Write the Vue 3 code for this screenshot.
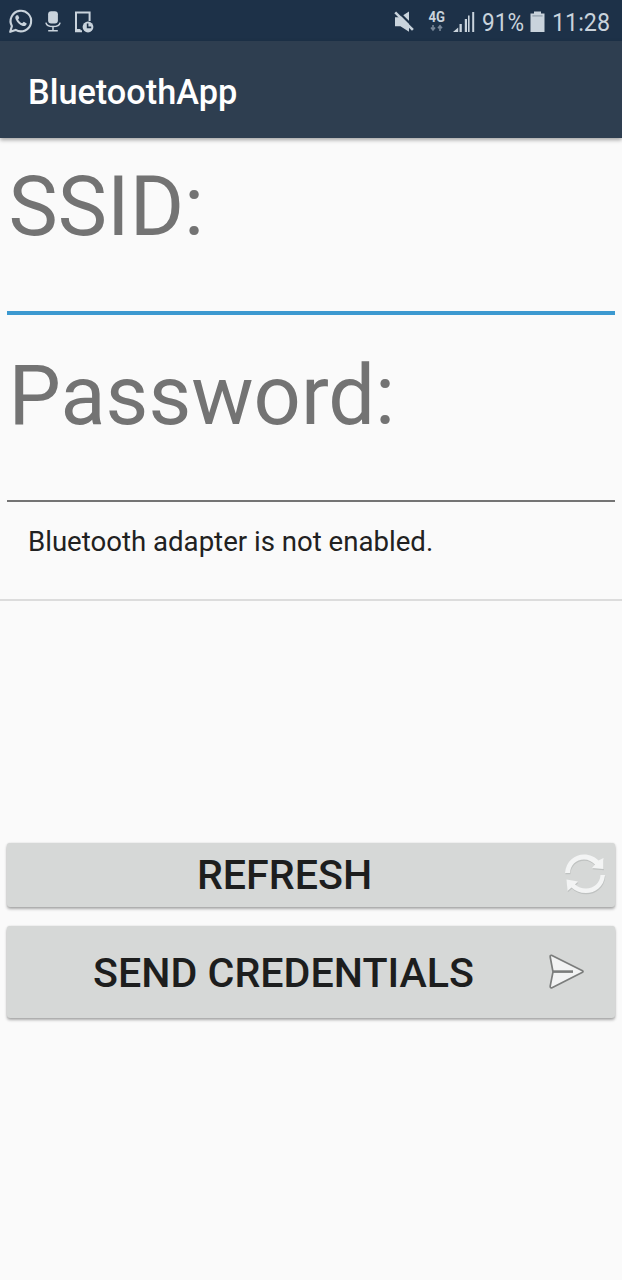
<script setup>
import { ref } from 'vue'

const ssid = ref('')
const password = ref('')
const devices = ref(['Bluetooth adapter is not enabled.'])
</script>

<template>
  <div class="screen">
    <div class="status">
      <svg class="whatsapp" width="26" height="26" viewBox="0 0 26 26">
        <path d="M2.2 23.8 L3.9 18.1 A10.3 10.3 0 1 1 7.6 21.9 Z" fill="none" stroke="#c9d3dc" stroke-width="2.1" stroke-linejoin="round" />
        <path d="M8.6 7.2 C7.2 8 6.9 9.6 7.8 11.5 C9.2 14.6 11.7 16.9 14.8 17.9 C16.9 18.5 18.6 17.4 18.7 15.5 L15.8 13.8 L14.2 15.3 C12.3 14.5 10.9 13.2 10.1 11.4 L11.3 10.1 L10.1 7.3 Z" fill="#c9d3dc" />
      </svg>
      <svg class="mic" width="16" height="22" viewBox="0 0 16 22">
        <rect x="3.1" y="0.3" width="9.8" height="12.2" rx="3" fill="#c9d3dc" />
        <path d="M0.9 11.6 C1.5 14.8 4.5 15.6 8 15.6 S14.5 14.8 15.1 11.6 M8 16 V20 M3.2 19.8 H12.8" fill="none" stroke="#c9d3dc" stroke-width="1.5" />
      </svg>
      <svg class="device" width="21" height="23" viewBox="0 0 21 23">
        <path d="M15.6 10 V1.5 H2 V20.2 H8" fill="none" stroke="#c9d3dc" stroke-width="2" />
        <path d="M2 18 H6.5 V21 H2z" fill="#c9d3dc" />
        <circle cx="14" cy="16" r="5.4" fill="#c9d3dc" />
        <path d="M13.6 12.6 V16.4 H17.2" fill="none" stroke="#1d3148" stroke-width="1.6" />
      </svg>
      <div class="grow"></div>
      <svg class="mute" width="21" height="23" viewBox="0 0 21 23">
        <path d="M1 6.2 H6 L15 0.5 V20.7 L6.4 15.2 H1z" fill="#c9d3dc" />
        <path d="M3.4 0 L20.8 17.2" stroke="#1d3148" stroke-width="2.2" />
        <path d="M1.2 1.4 L18.9 18.9" stroke="#c9d3dc" stroke-width="2.6" />
      </svg>
      <svg class="network" width="20" height="23" viewBox="0 0 20 23">
        <text x="0.5" y="10.8" font-size="13.8" font-weight="700" textLength="16.5" lengthAdjust="spacingAndGlyphs" fill="#c9d3dc">4G</text>
        <path d="M5 14 V18.8 M3 16.6 L5 19 L7 16.6 M12 20 V15 M10 17.2 L12 14.8 L14 17.2" fill="none" stroke="#788798" stroke-width="1.6" />
      </svg>
      <svg class="signal" width="23" height="22" viewBox="0 0 23 22">
        <path d="M0.5 21 L5.8 16.5 V21z M7.1 13 H9.4 V21 H7.1z M12.4 8 H14.6 V21 H12.4z" fill="#c9d3dc" transform="translate(-0.6 0)" />
        <path d="M15 4.5 H16.6 V21 H15z M19.2 1 H21.2 V21 H19.2z" fill="#c9d3dc" />
      </svg>
      <svg class="percent" width="46" height="34" viewBox="0 0 46 34">
        <text x="1" y="26" font-size="26.5" textLength="42" lengthAdjust="spacingAndGlyphs" fill="#c9d3dc">91%</text>
      </svg>
      <svg class="battery" width="15" height="22" viewBox="0 0 15 22">
        <path d="M4 0.5 H11 V2.6 H14.5 V21 H0.5 V2.6 H4z" fill="#c9d3dc" />
        <path d="M2.4 4.9 H12.6" stroke="#8f9caa" stroke-width="1.2" />
      </svg>
      <svg class="clock" width="62" height="34" viewBox="0 0 62 34">
        <text x="1" y="26" font-size="26.5" textLength="58" lengthAdjust="spacingAndGlyphs" fill="#c9d3dc">11:28</text>
      </svg>
    </div>
    <header class="appbar"><h1>BluetoothApp</h1></header>
    <main class="content">
      <label class="label" for="ssid">SSID:</label>
      <input id="ssid" v-model="ssid" class="field active" type="text" />
      <label class="label second" for="password">Password:</label>
      <input id="password" v-model="password" class="field" type="text" />
      <ul class="devices">
        <li v-for="device in devices" :key="device">{{ device }}</li>
      </ul>
      <button class="button refresh" type="button">
        <span>REFRESH</span>
        <svg width="44" height="44" viewBox="0 0 44 44">
          <g fill="#bfc2c1" transform="translate(0.4 1.2)">
            <path d="M2 20 C3 8 12 2 21 2 C27 2 32 4.5 35.5 8 L40.5 5 V16 L29 15 L32 11.5 C29 8.5 25.5 6.5 21 6.5 C13 6.5 7.5 12 7 20z" />
            <path d="M42 22 C41 34 32 40 23 40 C17 40 12 38 8.5 34.5 L4.5 38 L3.5 26.5 L15 28.5 L12 31.5 C15 34 18.5 35.5 23 35.5 C31 35.5 37 30 37.5 22z" />
          </g>
          <g fill="#f3f4f4">
            <path d="M2 20 C3 8 12 1.5 21 1.5 C27 1.5 32 4 35.5 7.5 L40.5 5 V16 L29 15 L32 11.5 C29 8.5 25.5 6.5 21 6.5 C13 6.5 7.5 12 7 20z" />
            <path d="M42 22 C41 34 32 40 23 40 C17 40 12 38 8.5 34.5 L4.5 38 L3.5 26.5 L15 28.5 L12 31.5 C15 34 18.5 35.5 23 35.5 C31 35.5 37 30 37.5 22z" />
          </g>
        </svg>
      </button>
      <button class="button send" type="button">
        <span>SEND CREDENTIALS</span>
        <svg width="38" height="38" viewBox="0 0 38 38">
          <path d="M3.5 2.3 Q2 2 2.2 4 L5 18.8 L2.2 33.2 Q2 35.4 4 34.7 L34.5 19.3 Q35.6 18.5 34.5 17.8 Z" fill="#f2f3f3" stroke="#7b7d7c" stroke-width="1.7" stroke-linejoin="round" />
          <path d="M5 18.6 H25" stroke="#7b7d7c" stroke-width="2.6" />
        </svg>
      </button>
    </main>
  </div>
</template>

<style>
body { margin: 0; background: #fafafa; }
</style>

<style scoped>
.screen {
  width: 622px;
  height: 1280px;
  overflow: hidden;
  background: #fafafa;
  font-family: Roboto, "Liberation Sans", sans-serif;
  display: flex;
  flex-direction: column;
}
.status {
  height: 41px;
  flex: none;
  box-sizing: border-box;
  padding: 0 9px 0 8px;
  background: #1d3148;
  display: flex;
  align-items: flex-start;
}
.status svg { flex: none; display: block; }
.grow { flex: 1; }
.whatsapp { margin-top: 8px; }
.mic { margin: 11px 0 0 11px; }
.device { margin: 11px 0 0 13px; }
.mute { margin: 11px 13px 0 0; }
.network { margin: 11px 5px 0 0; }
.signal { margin: 11px 5px 0 0; }
.percent { margin: 5px 3px 0 0; }
.battery { margin: 11px 6px 0 0; }
.clock { margin-top: 5px; }
.appbar {
  height: 97px;
  flex: none;
  background: #2e3e50;
  display: flex;
  align-items: center;
  padding-left: 28px;
  position: relative;
  box-shadow: 0 2px 4px rgba(0, 0, 0, 0.35);
}
h1 {
  margin: 4px 0 0;
  font-size: 34.3px;
  line-height: 40px;
  font-weight: 500;
  color: #fff;
}
.content { display: flex; flex-direction: column; padding-top: 20px; }
.label {
  margin-left: 8.5px;
  font-size: 83px;
  line-height: 97px;
  height: 97px;
  color: #737373;
}
.label.second { margin-top: 32px; }
.field {
  box-sizing: border-box;
  margin: 0 7px;
  height: 58px;
  padding: 0 4px;
  border: 0;
  border-bottom: 2px solid #747474;
  background: transparent;
  font: 31px Roboto, sans-serif;
  outline: none;
}
.field.active { height: 60px; border-bottom: 4px solid #3c99d0; }
.devices {
  list-style: none;
  margin: 0;
  padding: 0;
  height: 341px;
}
.devices li {
  box-sizing: border-box;
  height: 99px;
  padding: 23px 28px 0;
  border-bottom: 2px solid #dcdcdc;
  font-size: 27.6px;
  line-height: 34px;
  color: #212121;
}
.button {
  box-sizing: border-box;
  margin: 0 7px;
  padding: 0;
  border: 0;
  border-radius: 3px;
  background: #d6d8d7;
  box-shadow: 0 2px 3px rgba(0, 0, 0, 0.32), 0 0 2px rgba(0, 0, 0, 0.12);
  display: flex;
  align-items: center;
  font-family: Roboto, "Liberation Sans", sans-serif;
  font-size: 41.2px;
  font-weight: 500;
  line-height: 48px;
  color: #1d1e1e;
}
.button span { flex: 1; text-align: center; }
.button svg { flex: none; display: block; }
.refresh { height: 64px; padding-right: 8px; }
.refresh span { padding-right: 1px; }
.send { height: 92px; margin-top: 19px; padding-right: 29px; }
.send span { padding: 2px 0 0 12px; }
</style>
